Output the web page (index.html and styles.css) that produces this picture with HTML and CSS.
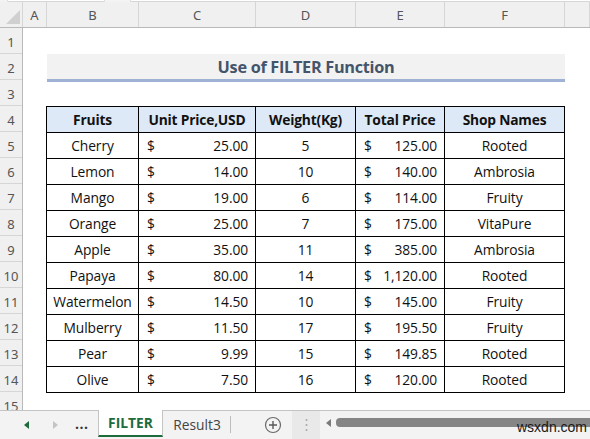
FILE: index.html
```html
<!DOCTYPE html>
<html>
<head>
<meta charset="utf-8">
<link rel="stylesheet" href="styles.css">
</head>
<body>
<div class="app">
  <div class="topstrip"><span class="namebox"></span><span class="fbar"></span></div>
  <div class="colheads">
    <div class="corner"><svg width="14" height="14" viewBox="0 0 14 14"><polygon points="14,0 14,14 0,14" fill="#d0d0d0"/></svg></div>
    <div class="ch a">A</div>
    <div class="ch b">B</div>
    <div class="ch c">C</div>
    <div class="ch d">D</div>
    <div class="ch e">E</div>
    <div class="ch f">F</div>
    <div class="ch g"></div>
  </div>
  <div class="sheet">
    <div class="rowheads">
      <div class="rh">1</div><div class="rh">2</div><div class="rh">3</div><div class="rh">4</div>
      <div class="rh">5</div><div class="rh">6</div><div class="rh">7</div><div class="rh">8</div>
      <div class="rh">9</div><div class="rh">10</div><div class="rh">11</div><div class="rh">12</div>
      <div class="rh">13</div><div class="rh">14</div><div class="rh">15</div>
    </div>
    <div class="cells">
      <div class="title-area">
        <div class="title">Use of FILTER Function</div>
      </div>
      <div class="table">
        <div class="hd">Fruits</div><div class="hd">Unit Price,USD</div><div class="hd">Weight(Kg)</div><div class="hd">Total Price</div><div class="hd">Shop Names</div>

        <div class="td">Cherry</div><div class="td cur"><span>$</span><span>25.00</span></div><div class="td">5</div><div class="td cur"><span>$</span><span>125.00</span></div><div class="td">Rooted</div>
        <div class="td">Lemon</div><div class="td cur"><span>$</span><span>14.00</span></div><div class="td">10</div><div class="td cur"><span>$</span><span>140.00</span></div><div class="td">Ambrosia</div>
        <div class="td">Mango</div><div class="td cur"><span>$</span><span>19.00</span></div><div class="td">6</div><div class="td cur"><span>$</span><span>114.00</span></div><div class="td">Fruity</div>
        <div class="td">Orange</div><div class="td cur"><span>$</span><span>25.00</span></div><div class="td">7</div><div class="td cur"><span>$</span><span>175.00</span></div><div class="td">VitaPure</div>
        <div class="td">Apple</div><div class="td cur"><span>$</span><span>35.00</span></div><div class="td">11</div><div class="td cur"><span>$</span><span>385.00</span></div><div class="td">Ambrosia</div>
        <div class="td">Papaya</div><div class="td cur"><span>$</span><span>80.00</span></div><div class="td">14</div><div class="td cur"><span>$</span><span>1,120.00</span></div><div class="td">Rooted</div>
        <div class="td">Watermelon</div><div class="td cur"><span>$</span><span>14.50</span></div><div class="td">10</div><div class="td cur"><span>$</span><span>145.00</span></div><div class="td">Fruity</div>
        <div class="td">Mulberry</div><div class="td cur"><span>$</span><span>11.50</span></div><div class="td">17</div><div class="td cur"><span>$</span><span>195.50</span></div><div class="td">Fruity</div>
        <div class="td">Pear</div><div class="td cur"><span>$</span><span>9.99</span></div><div class="td">15</div><div class="td cur"><span>$</span><span>149.85</span></div><div class="td">Rooted</div>
        <div class="td">Olive</div><div class="td cur"><span>$</span><span>7.50</span></div><div class="td">16</div><div class="td cur"><span>$</span><span>120.00</span></div><div class="td">Rooted</div>
      </div>
    </div>
  </div>
  <div class="tabbar">
    <div class="navs">
      <svg class="nav" width="8" height="10" viewBox="0 0 8 10"><polygon points="6,1 6,9 1,5" fill="#1e6b3c"/></svg>
      <svg class="nav" width="8" height="10" viewBox="0 0 8 10"><polygon points="2,1 2,9 7,5" fill="#c4c4c4"/></svg>
      <span class="dots">...</span>
    </div>
    <div class="tab active">FILTER</div>
    <div class="tab">Result3</div>
    <div class="addwrap">
      <svg width="18" height="18" viewBox="0 0 18 18"><circle cx="9" cy="9" r="7.5" fill="none" stroke="#6a6a6a" stroke-width="1.2"/><path d="M9 5v8M5 9h8" stroke="#5a5a5a" stroke-width="1.4"/></svg>
    </div>
    <div class="splitter"><svg width="3" height="14" viewBox="0 0 3 14"><circle cx="1.5" cy="2" r="1" fill="#a8a8a8"/><circle cx="1.5" cy="7" r="1" fill="#a8a8a8"/><circle cx="1.5" cy="12" r="1" fill="#a8a8a8"/></svg></div>
    <div class="hscroll">
      <svg width="8" height="10" viewBox="0 0 8 10"><polygon points="6,1 6,9 1,5" fill="#7a7a7a"/></svg>
      <div class="thumb"></div>
    </div>
    <div class="watermark">wsxdn.com</div>
  </div>
</div>
</body>
</html>
```
FILE: styles.css
```css
* { box-sizing: border-box; }
html, body { margin: 0; padding: 0; }
body {
  width: 590px;
  height: 439px;
  overflow: hidden;
  background: #fff;
  font-family: "Open Sans", "Noto Sans", sans-serif;
}
.app { width: 590px; height: 439px; position: relative; overflow: hidden; display: flex; flex-direction: column; }

.topstrip { height: 2px; background: #f3f3f3; display: flex; gap: 25px; padding-left: 7px; }
.namebox { width: 98px; height: 2px; background: #fff; border: 1px solid #d6d6d6; border-top: none; border-radius: 0 0 3px 3px; }
.fbar { flex: 1; height: 2px; background: #fff; border: 1px solid #d6d6d6; border-top: none; border-right: none; border-radius: 0 0 0 3px; }

.colheads {
  height: 26px;
  display: grid;
  grid-template-columns: 23px 24px 92px 117px 100px 89px 120px 25px;
  background: #f0f0f0;
  border-bottom: 1px solid #b9b9b9;
}
.corner { display: flex; align-items: flex-end; justify-content: flex-end; padding: 0 2px 3px 0; border-right: 1px solid #d6d6d6; }
.ch {
  border-right: 1px solid #d6d6d6;
  display: flex; align-items: center; justify-content: center;
  font-size: 13px; color: #555;
  font-family: "Noto Sans", sans-serif;
}

.sheet { flex: 1; display: flex; min-height: 0; }
.rowheads { width: 23px; background: #f0f0f0; border-right: 1px solid #b9b9b9; display: flex; flex-direction: column; }
.rh {
  height: 26px; flex: none;
  border-bottom: 1px solid #d6d6d6;
  display: flex; align-items: center; justify-content: center;
  font-size: 13px; color: #555;
  font-family: "Noto Sans", sans-serif;
  padding-top: 2px;
}
.cells { padding-left: 24px; padding-top: 26px; }

.title-area { height: 52px; }
.title {
  width: 518px; height: 28px;
  background: #f2f2f2;
  border-bottom: 3px solid #9fb2d6;
  display: flex; align-items: center; justify-content: center;
  font-weight: 700; font-size: 16.3px; color: #44546a;
  letter-spacing: -0.3px;
  padding-top: 1px;
}

.table {
  display: grid;
  grid-template-columns: 92px 117px 100px 89px 120px;
  grid-auto-rows: 26px;
  width: 519px;
  border-top: 1px solid #000;
  border-left: 1px solid #000;
  margin-left: -1px;
}
.hd, .td {
  border-right: 1px solid #000;
  border-bottom: 1px solid #000;
  display: flex; align-items: center; justify-content: center;
  font-size: 13.8px; color: #111;
  white-space: nowrap;
}
.hd { background: #dde9f6; font-weight: 700; letter-spacing: -0.2px; }
.td { letter-spacing: -0.1px; }
.td.cur { justify-content: space-between; padding: 0 7px 0 8px; }

.tabbar {
  position: absolute; left: 0; right: 0; bottom: 0;
  height: 29px;
  background: #f3f3f3;
  border-top: 1px solid #c4c4c4;
  display: flex; align-items: stretch;
}
.navs { width: 98px; display: flex; align-items: center; padding-left: 23px; }
.nav:first-child { margin-right: 20px; }
.dots { margin-left: 16px; font-weight: 700; font-size: 14px; color: #333; letter-spacing: 0.5px; padding-bottom: 4px; }
.tab {
  display: flex; align-items: center; justify-content: center;
  font-size: 13.8px; color: #444;
  margin-top: -1px;
}
.tab.active {
  width: 65px;
  background: #fff;
  color: #1e6b3c; font-weight: 700;
  border-left: 1px solid #c4c4c4;
  border-right: 1px solid #c4c4c4;
  border-bottom: 2px solid #1e6b3c;
  margin-bottom: 2px;
}
.tab:not(.active) {
  width: 68px;
  position: relative;
}
.tab:not(.active)::after {
  content: ""; position: absolute; right: 0; top: 6px; bottom: 6px;
  border-right: 1px solid #bdbdbd;
}
.addwrap { width: 61px; display: flex; align-items: center; justify-content: flex-start; padding-left: 33px; }
.splitter { width: 28px; background: #e9e9e9; display: flex; align-items: center; justify-content: center; }
.hscroll { flex: 1; display: flex; align-items: center; padding-left: 5px; gap: 3px; padding-bottom: 5px; }
.thumb { flex: 1; height: 9px; background: #858585; border-radius: 4px 0 0 4px; }
.watermark {
  position: absolute; left: 517px; top: 8px;
  font-family: "Liberation Sans", Arial, sans-serif;
  font-size: 14px; color: #1a1a1a;
  background: transparent;
}
```
